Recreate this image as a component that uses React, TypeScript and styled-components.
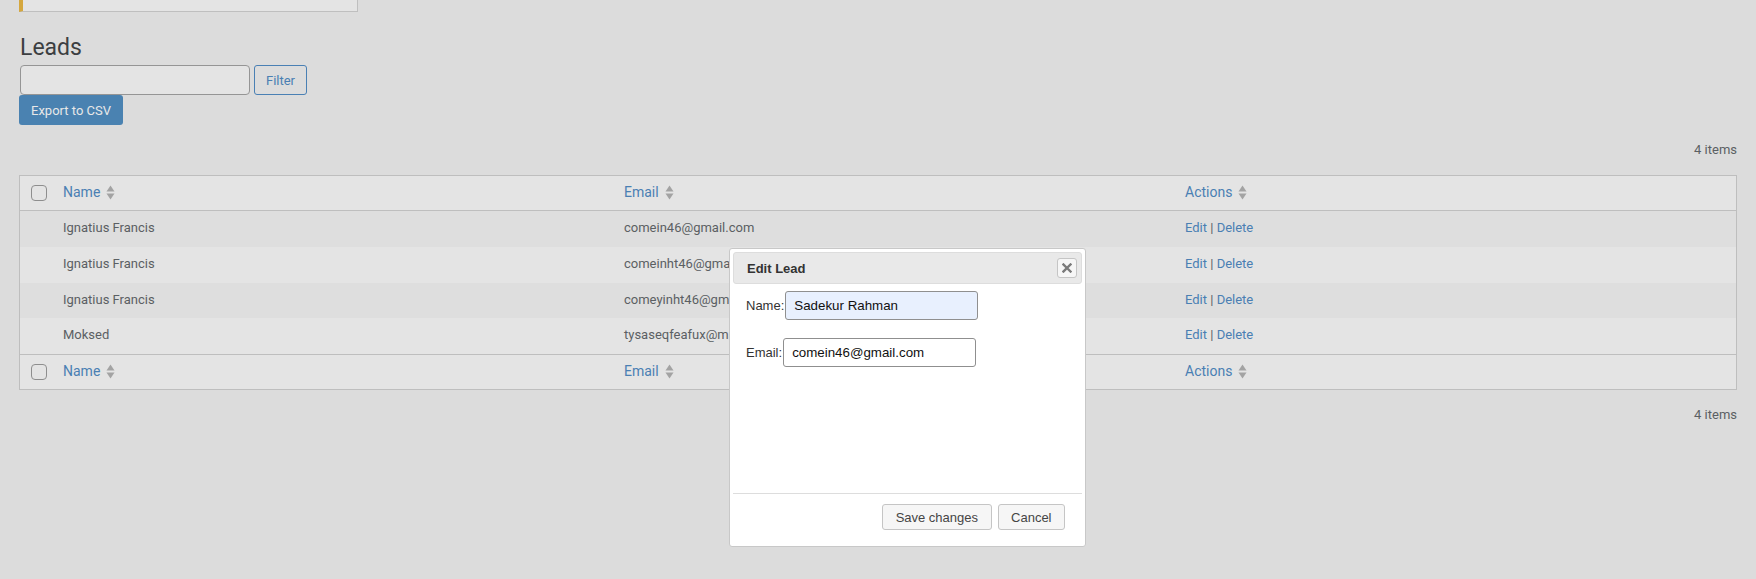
import React from 'react';
import styled, { createGlobalStyle } from 'styled-components';

const GlobalStyle = createGlobalStyle`
  html, body { margin: 0; padding: 0; background: #dcdcdc; }
  body { font-family: Roboto, "Liberation Sans", sans-serif; color: #5b5f63; }
  * { box-sizing: border-box; }
`;

const Page = styled.div`
  position: relative;
  min-height: 579px;
  padding: 0 19px;
`;

const Notice = styled.div`
  width: 339px;
  height: 12px;
  background: #e4e4e4;
  border-left: 4px solid #d5a73e;
  border-right: 1px solid #bfbfbf;
  border-bottom: 1px solid #bfbfbf;
`;

const Title = styled.h1`
  margin: 21px 0 3px 1px;
  font-size: 23px;
  font-weight: 400;
  line-height: 29px;
  color: #3c3f42;
`;

const FilterRow = styled.div`
  display: flex;
  gap: 4px;
  margin-left: 1px;
`;

const FilterInput = styled.input`
  width: 230px;
  height: 30px;
  border: 1px solid #959595;
  border-radius: 4px;
  background: #e4e4e4;
  outline: none;
`;

const OutlineButton = styled.button`
  height: 30px;
  width: 53px;
  border: 1px solid #4a80b4;
  border-radius: 3px;
  background: transparent;
  color: #4a7fb3;
  font: 13px Roboto, sans-serif;
  padding: 0;
`;

const PrimaryButton = styled.button`
  display: block;
  height: 30px;
  width: 104px;
  border: none;
  border-radius: 3px;
  background: #4a82b1;
  color: #e8e8e8;
  font: 13px Roboto, sans-serif;
  padding: 0;
`;

const ItemCount = styled.div`
  text-align: right;
  font-size: 13px;
  line-height: 20px;
  margin: 15px 0;
  color: #5b5f63;
`;

const Table = styled.table`
  width: 100%;
  table-layout: fixed;
  border-collapse: separate;
  border-spacing: 0;
  border: 1px solid #bebebe;
  background: #e4e4e4;
`;

const HeadCell = styled.th<{ $foot?: boolean }>`
  text-align: left;
  font-weight: 400;
  font-size: 14px;
  line-height: 20px;
  padding: 6px 10px 8px;
  ${(p) => (p.$foot ? 'border-top: 1px solid #bebebe;' : 'border-bottom: 1px solid #bebebe;')}
`;

const CheckCell = styled.th<{ $foot?: boolean }>`
  width: 33px;
  padding: 0 0 0 11px;
  vertical-align: middle;
  ${(p) => (p.$foot ? 'border-top: 1px solid #bebebe;' : 'border-bottom: 1px solid #bebebe;')}
`;

const Check = styled.input`
  appearance: none;
  display: block;
  margin: 0;
  width: 16px;
  height: 16px;
  border: 1px solid #8e8e8e;
  border-radius: 4px;
  background: #e4e4e4;
`;

const SortLink = styled.span`
  display: inline-flex;
  align-items: center;
  gap: 6px;
  color: #4a7fb3;
`;

const Row = styled.tr<{ $odd: boolean }>`
  background: ${(p) => (p.$odd ? '#dedede' : '#e4e4e4')};
`;

const Cell = styled.td`
  font-size: 13px;
  line-height: 19.75px;
  padding: 7px 10px 9px;
  color: #5b5f63;
  white-space: nowrap;
  overflow: hidden;
`;

const Link = styled.a`
  color: #4a7fb3;
  text-decoration: none;
`;

const Dialog = styled.div`
  position: absolute;
  left: 729px;
  top: 248px;
  width: 357px;
  height: 299px;
  padding: 3px;
  border: 1px solid #c8c8c8;
  border-radius: 3px;
  background: #fff;
  display: flex;
  flex-direction: column;
  font-family: "Liberation Sans", Arial, sans-serif;
  color: #333;
`;

const TitleBar = styled.div`
  height: 32px;
  flex: none;
  display: flex;
  align-items: center;
  justify-content: space-between;
  padding: 0 4px 0 13px;
  border: 1px solid #dddddd;
  border-radius: 3px;
  background: #e9e9e9;
  font-weight: 700;
  font-size: 13px;
  color: #333;
`;

const CloseButton = styled.button`
  width: 20px;
  height: 20px;
  padding: 0;
  border: 1px solid #c5c5c5;
  border-radius: 3px;
  background: #f6f6f6;
  display: flex;
  align-items: center;
  justify-content: center;
`;

const DialogBody = styled.div`
  flex: 1;
  padding: 7px 13px 0;
  display: flex;
  flex-direction: column;
  gap: 18px;
`;

const Field = styled.label`
  display: flex;
  align-items: center;
  font-size: 13px;
  color: #333;
`;

const TextInput = styled.input<{ $filled?: boolean }>`
  margin-left: 1px;
  width: 193px;
  height: 29px;
  padding: 0 8px;
  border: 1px solid #8f8f8f;
  border-radius: 3px;
  background: ${(p) => (p.$filled ? '#e8f0fe' : '#fff')};
  font: 13.33px "Liberation Sans", Arial, sans-serif;
  color: #111;
  outline: none;
`;

const ButtonPane = styled.div`
  flex: none;
  border-top: 1px solid #dddddd;
  padding: 10px 17px 13px;
  display: flex;
  justify-content: flex-end;
  gap: 6px;
`;

const DialogButton = styled.button`
  height: 26px;
  padding: 0 12.5px;
  border: 1px solid #c5c5c5;
  border-radius: 3px;
  background: #f6f6f6;
  color: #454545;
  font: 13px "Liberation Sans", Arial, sans-serif;
`;

const SortIcon = () => (
  <svg width="9" height="15" viewBox="0 0 9 15">
    <path d="M4.5 0.5 L8.5 6.5 L0.5 6.5 Z" fill="#a3a3a3" />
    <path d="M0.5 8.5 L8.5 8.5 L4.5 14.5 Z" fill="#a3a3a3" />
  </svg>
);

const CloseIcon = () => (
  <svg width="10" height="10" viewBox="0 0 10 10">
    <path d="M1.5 1.5 L8.5 8.5 M8.5 1.5 L1.5 8.5" stroke="#7a7a7a" strokeWidth="2.4" strokeLinecap="square" />
  </svg>
);

const leads = [
  { name: 'Ignatius Francis', email: 'comein46@gmail.com' },
  { name: 'Ignatius Francis', email: 'comeinht46@gmail.com' },
  { name: 'Ignatius Francis', email: 'comeyinht46@gmail.com' },
  { name: 'Moksed', email: 'tysaseqfeafux@mailinator.com' },
];

const HeaderRow = ({ foot }: { foot?: boolean }) => (
  <tr>
    <CheckCell $foot={foot}>
      <Check type="checkbox" />
    </CheckCell>
    {['Name', 'Email', 'Actions'].map((h) => (
      <HeadCell key={h} $foot={foot}>
        <SortLink>
          {h}
          <SortIcon />
        </SortLink>
      </HeadCell>
    ))}
  </tr>
);

export default function App() {
  return (
    <>
      <GlobalStyle />
      <Page>
        <Notice />
        <Title>Leads</Title>
        <FilterRow>
          <FilterInput type="text" />
          <OutlineButton>Filter</OutlineButton>
        </FilterRow>
        <PrimaryButton>Export to CSV</PrimaryButton>
        <ItemCount>4 items</ItemCount>
        <Table>
          <thead>
            <HeaderRow />
          </thead>
          <tbody>
            {leads.map((l, i) => (
              <Row key={i} $odd={i % 2 === 0}>
                <Cell />
                <Cell>{l.name}</Cell>
                <Cell>{l.email}</Cell>
                <Cell>
                  <Link href="#">Edit</Link> | <Link href="#">Delete</Link>
                </Cell>
              </Row>
            ))}
          </tbody>
          <tfoot>
            <HeaderRow foot />
          </tfoot>
        </Table>
        <ItemCount>4 items</ItemCount>

        <Dialog>
          <TitleBar>
            <span>Edit Lead</span>
            <CloseButton aria-label="close">
              <CloseIcon />
            </CloseButton>
          </TitleBar>
          <DialogBody>
            <Field>
              Name:<TextInput $filled defaultValue="Sadekur Rahman" />
            </Field>
            <Field>
              Email:<TextInput defaultValue="comein46@gmail.com" />
            </Field>
          </DialogBody>
          <ButtonPane>
            <DialogButton>Save changes</DialogButton>
            <DialogButton>Cancel</DialogButton>
          </ButtonPane>
        </Dialog>
      </Page>
    </>
  );
}
